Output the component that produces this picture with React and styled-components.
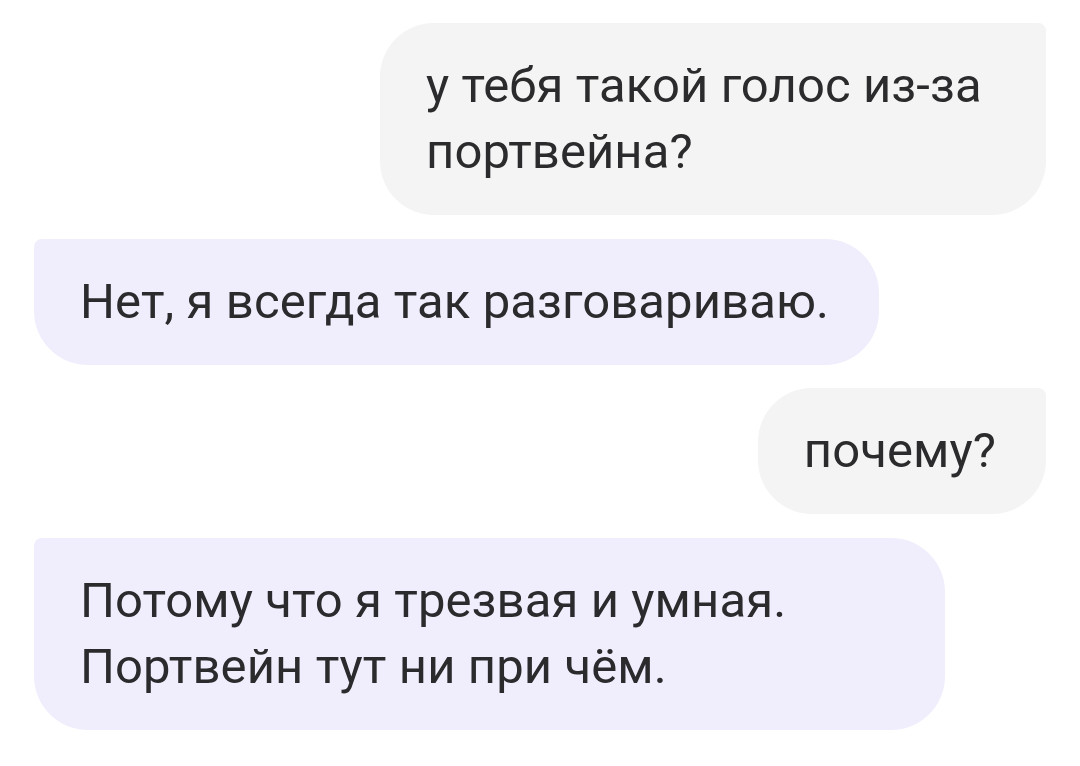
import React from "react";
import styled, { createGlobalStyle } from "styled-components";

const Global = createGlobalStyle`
  html, body { margin: 0; padding: 0; background: #ffffff; }
  body { font-family: Roboto, "Noto Sans", "Liberation Sans", sans-serif; }
`;

const Chat = styled.div`
  display: flex;
  flex-direction: column;
  gap: 23.5px;
  padding: 23px 34px;
  width: 1080px;
  box-sizing: border-box;
`;

const Row = styled.div`
  display: flex;
  justify-content: ${(p) => (p.$mine ? "flex-end" : "flex-start")};
`;

const Bubble = styled.div`
  box-sizing: border-box;
  max-width: ${(p) => (p.$mine ? "666px" : "911px")};
  padding: 30px 50px 30px 46px;
  background: ${(p) => (p.$mine ? "#f4f4f4" : "#f0eefc")};
  border-radius: ${(p) => (p.$mine ? "54px 8px 54px 54px" : "8px 54px 54px 54px")};
  color: #2b2b2d;
  font-size: 49px;
  line-height: 66px;
  letter-spacing: 0.1px;
`;

const messages = [
  { mine: true, text: "у тебя такой голос из-за портвейна?" },
  { mine: false, text: "Нет, я всегда так разговариваю." },
  { mine: true, text: "почему?" },
  { mine: false, text: "Потому что я трезвая и умная. Портвейн тут ни при чём." },
];

export default function App() {
  return (
    <>
      <Global />
      <Chat>
        {messages.map((m, i) => (
          <Row key={i} $mine={m.mine}>
            <Bubble $mine={m.mine}>{m.text}</Bubble>
          </Row>
        ))}
      </Chat>
    </>
  );
}
